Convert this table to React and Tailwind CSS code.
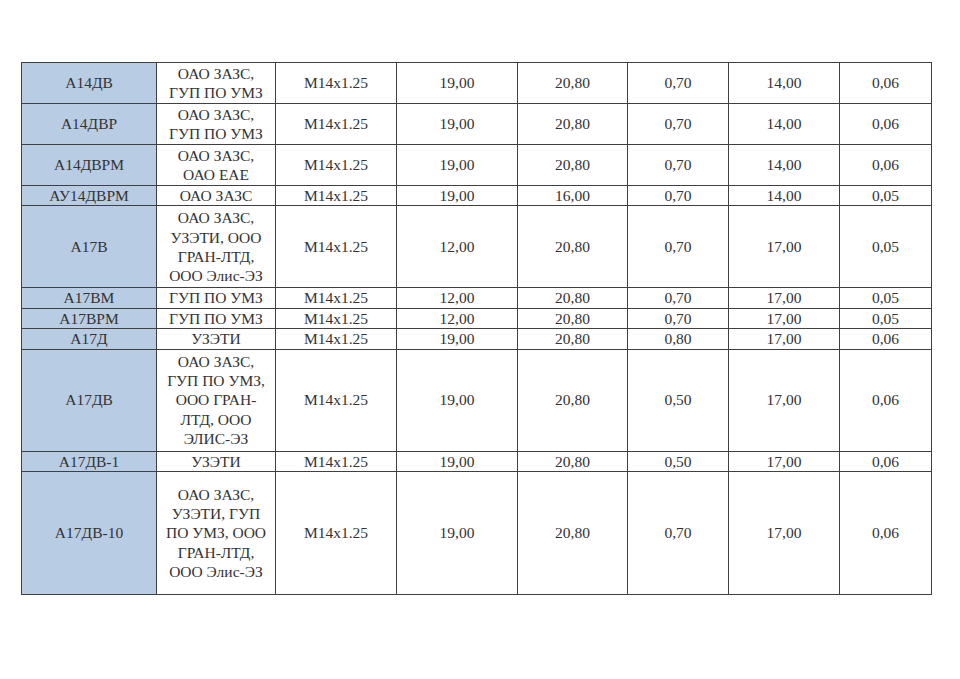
import React from 'react';

const rows = [
  { name: 'А14ДВ', maker: ['ОАО ЗАЗС,', 'ГУП ПО УМЗ'], thread: 'M14x1.25', a: '19,00', b: '20,80', c: '0,70', d: '14,00', e: '0,06', h: 'h-[41px]' },
  { name: 'А14ДВР', maker: ['ОАО ЗАЗС,', 'ГУП ПО УМЗ'], thread: 'M14x1.25', a: '19,00', b: '20,80', c: '0,70', d: '14,00', e: '0,06', h: 'h-[41px]' },
  { name: 'А14ДВРМ', maker: ['ОАО ЗАЗС,', 'ОАО ЕАЕ'], thread: 'M14x1.25', a: '19,00', b: '20,80', c: '0,70', d: '14,00', e: '0,06', h: 'h-[41px]' },
  { name: 'АУ14ДВРМ', maker: ['ОАО ЗАЗС'], thread: 'M14x1.25', a: '19,00', b: '16,00', c: '0,70', d: '14,00', e: '0,05', h: 'h-[20px]' },
  { name: 'А17В', maker: ['ОАО ЗАЗС,', 'УЗЭТИ, ООО', 'ГРАН-ЛТД,', 'ООО Элис-ЭЗ'], thread: 'M14x1.25', a: '12,00', b: '20,80', c: '0,70', d: '17,00', e: '0,05', h: 'h-[82px]' },
  { name: 'А17ВМ', maker: ['ГУП ПО УМЗ'], thread: 'M14x1.25', a: '12,00', b: '20,80', c: '0,70', d: '17,00', e: '0,05', h: 'h-[20px]' },
  { name: 'А17ВРМ', maker: ['ГУП ПО УМЗ'], thread: 'M14x1.25', a: '12,00', b: '20,80', c: '0,70', d: '17,00', e: '0,05', h: 'h-[20px]' },
  { name: 'А17Д', maker: ['УЗЭТИ'], thread: 'M14x1.25', a: '19,00', b: '20,80', c: '0,80', d: '17,00', e: '0,06', h: 'h-[20px]' },
  { name: 'А17ДВ', maker: ['ОАО ЗАЗС,', 'ГУП ПО УМЗ,', 'ООО ГРАН-', 'ЛТД, ООО', 'ЭЛИС-ЭЗ'], thread: 'M14x1.25', a: '19,00', b: '20,80', c: '0,50', d: '17,00', e: '0,06', h: 'h-[102px]' },
  { name: 'А17ДВ-1', maker: ['УЗЭТИ'], thread: 'M14x1.25', a: '19,00', b: '20,80', c: '0,50', d: '17,00', e: '0,06', h: 'h-[20px]' },
  { name: 'А17ДВ-10', maker: ['ОАО ЗАЗС,', 'УЗЭТИ, ГУП', 'ПО УМЗ, ООО', 'ГРАН-ЛТД,', 'ООО Элис-ЭЗ'], thread: 'M14x1.25', a: '19,00', b: '20,80', c: '0,70', d: '17,00', e: '0,06', h: 'h-[123px]' },
];

const cell = 'border border-[#404040] p-0 align-middle text-center whitespace-nowrap';

export default function App() {
  return (
    <div className="w-[960px] h-[679px] bg-white overflow-hidden pt-[62px] pl-[21px] text-[#333] font-['Liberation_Serif','Times_New_Roman',serif] text-[15.5px] leading-[19.4px]">
      <table className="table-fixed border-collapse w-[910px]">
        <colgroup>
          <col className="w-[135px]" />
          <col className="w-[119px]" />
          <col className="w-[121px]" />
          <col className="w-[121px]" />
          <col className="w-[110px]" />
          <col className="w-[101px]" />
          <col className="w-[111px]" />
          <col className="w-[92px]" />
        </colgroup>
        <tbody>
          {rows.map((r) => (
            <tr key={r.name} className={r.h}>
              <td className={`${cell} bg-[#b8cce4]`}>{r.name}</td>
              <td className={cell}>
                {r.maker.map((line, i) => (
                  <div key={i}>{line}</div>
                ))}
              </td>
              <td className={cell}>{r.thread}</td>
              <td className={cell}>{r.a}</td>
              <td className={cell}>{r.b}</td>
              <td className={cell}>{r.c}</td>
              <td className={cell}>{r.d}</td>
              <td className={cell}>{r.e}</td>
            </tr>
          ))}
        </tbody>
      </table>
    </div>
  );
}
